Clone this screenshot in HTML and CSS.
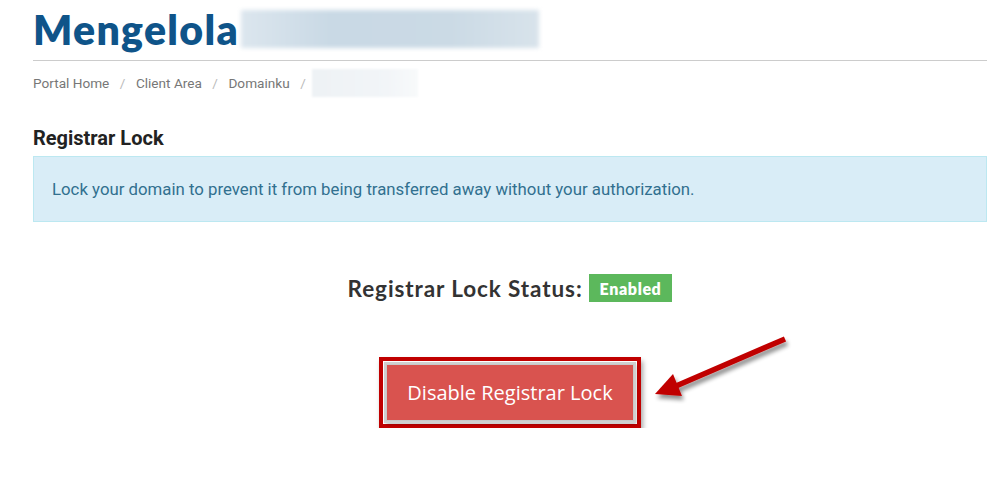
FILE: index.html
```html
<!DOCTYPE html>
<html>
<head>
<meta charset="utf-8">
<link rel="stylesheet" href="styles.css">
</head>
<body>
<div class="page">
  <div class="header">
    <h1 class="title">Mengelola</h1>
    <span class="blur-title"></span>
  </div>
  <nav class="crumbs">
    <span class="crumb">Portal Home</span><span class="sep">/</span>
    <span class="crumb">Client Area</span><span class="sep">/</span>
    <span class="crumb">Domainku</span><span class="sep">/</span>
    <span class="blur-crumb"></span>
  </nav>
  <h3 class="section">Registrar Lock</h3>
  <div class="alert">Lock your domain to prevent it from being transferred away without your authorization.</div>
  <div class="status">
    <span class="status-text">Registrar Lock Status:</span>
    <span class="badge">Enabled</span>
  </div>
  <div class="action">
    <div class="frame">
      <button class="btn">Disable Registrar Lock</button>
    </div>
    <svg class="arrow" width="170" height="90" viewBox="0 0 170 90">
      <defs>
        <filter id="sh" x="-20%" y="-40%" width="150%" height="200%">
          <feGaussianBlur in="SourceAlpha" stdDeviation="2"/>
          <feOffset dx="2" dy="4"/>
          <feComponentTransfer><feFuncA type="linear" slope="0.45"/></feComponentTransfer>
          <feMerge><feMergeNode/><feMergeNode in="SourceGraphic"/></feMerge>
        </filter>
      </defs>
      <g filter="url(#sh)" fill="#c00000">
        <line x1="145" y1="14" x2="36" y2="61" stroke="#c00000" stroke-width="5.5"/>
        <polygon points="15,69 33,49 42,71"/>
      </g>
    </svg>
  </div>
</div>
</body>
</html>
```
FILE: styles.css
```css
* { box-sizing: border-box; }
html, body { margin: 0; padding: 0; background: #fff; }
body { font-family: Roboto, "Liberation Sans", sans-serif; }
.page { margin: 0 13px 0 33px; }
.header {
  display: flex;
  align-items: center;
  height: 61px;
  border-bottom: 1px solid #cccccc;
  padding-bottom: 2px;
}
.title {
  margin: 0;
  font-family: Lato, "Liberation Sans", sans-serif;
  font-weight: 800;
  font-size: 41px;
  color: #0f5489;
  letter-spacing: 1.3px;
  line-height: 1;
}
.blur-title {
  display: block;
  width: 298px;
  height: 38px;
  margin-left: 2px;
  background: linear-gradient(90deg, #dce6ee, #c9d9e5 30%, #cbdae5 70%, #d8e3eb);
  filter: blur(2px);
}
.crumbs {
  display: flex;
  align-items: center;
  height: 43px;
  padding-top: 1px;
  font-size: 13.6px;
  color: #777;
}
.sep { color: #bbb; margin: 0 10.5px; }
.blur-crumb {
  display: block;
  width: 106px;
  height: 28px;
  margin-left: -4px;
  background: linear-gradient(90deg, #eef2f5, #f2f5f8 70%, #f8fafb);
  filter: blur(1px);
}
.section {
  margin: 20px 0 4px;
  font-size: 20px;
  font-weight: 700;
  color: #222;
  letter-spacing: 0;
  line-height: 28px;
}
.alert {
  background: #d9edf7;
  border: 1px solid #bce8f1;
  color: #31708f;
  font-size: 16.8px;
  height: 66px;
  padding: 0 18px;
  display: flex;
  align-items: center;
}
.status {
  display: flex;
  justify-content: center;
  align-items: center;
  margin-top: 52px;
  gap: 6px;
}
.status-text {
  font-family: Lato, "Liberation Sans", sans-serif;
  font-weight: 700;
  font-size: 22.5px;
  letter-spacing: 0.9px;
  color: #333;
}
.badge {
  background: #5cb85c;
  color: #fff;
  font-family: Lato, "Liberation Sans", sans-serif;
  font-weight: 800;
  font-size: 16px;
  letter-spacing: 0.6px;
  height: 28px;
  padding: 0 11px;
  display: flex;
  align-items: center;
}
.action {
  position: relative;
  display: flex;
  justify-content: center;
  margin-top: 55px;
}
.frame {
  border: 4px solid #c00000;
  padding: 2px;
  background: #fff;
  box-shadow: 2px 4px 5px rgba(0,0,0,0.35);
  transform: translateX(31px);
  margin-right: 62px;
}
.btn {
  display: block;
  width: 250px;
  height: 59px;
  border: 0;
  background: #d9534f;
  color: #fff;
  font-family: "Open Sans", "Liberation Sans", sans-serif;
  font-size: 20px;
  box-shadow: inset 0 0 0 2px #c9c9c9, 1px 2px 3px rgba(0,0,0,0.3);
  outline: 2px solid #d0d0d0;
  outline-offset: -1px;
}
.arrow {
  position: absolute;
  left: 607px;
  top: -32px;
}
```
